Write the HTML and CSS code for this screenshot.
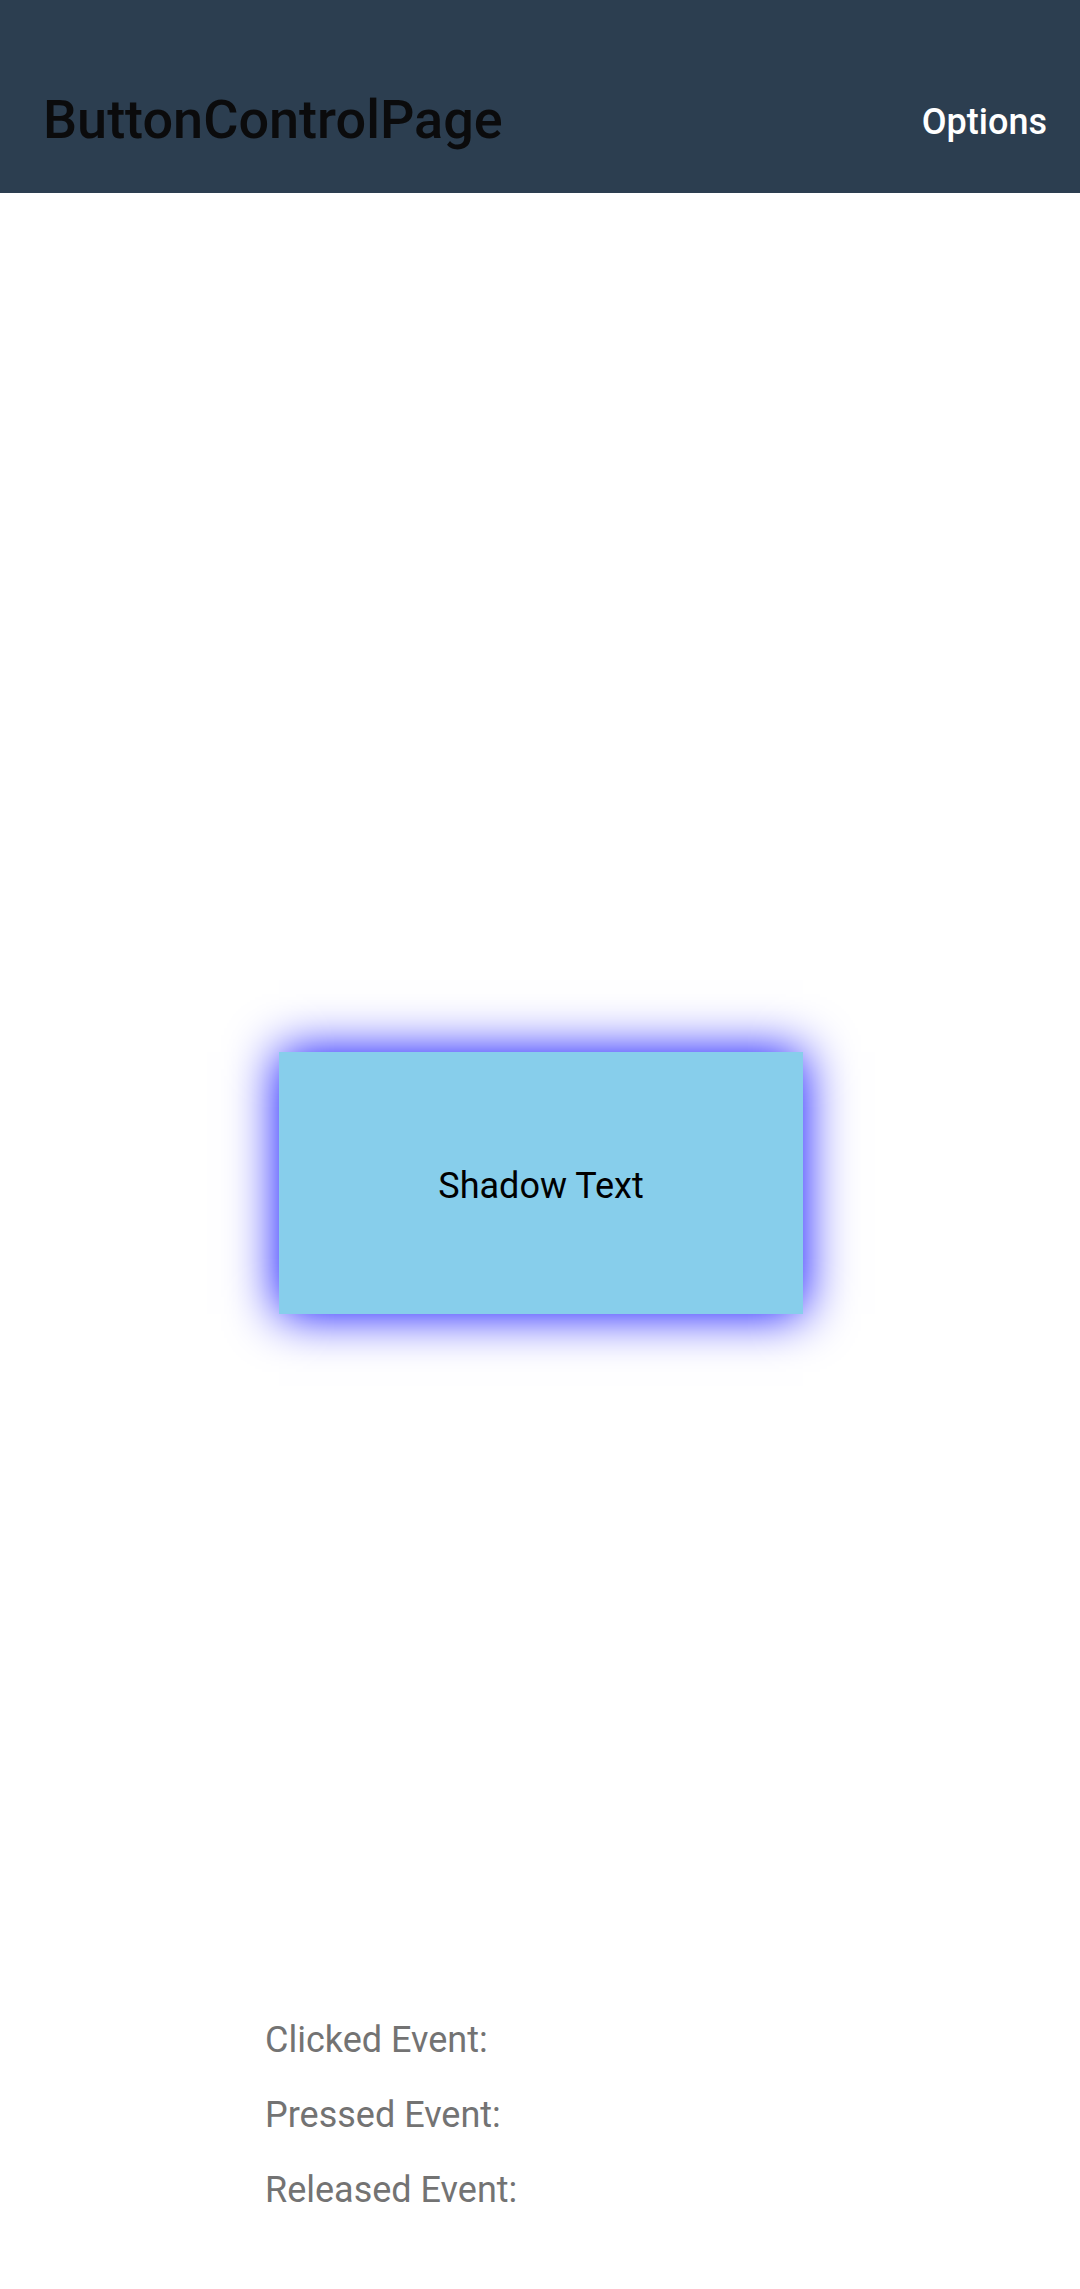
FILE: index.html
```html
<!DOCTYPE html>
<html>
<head>
<meta charset="utf-8">
<link rel="stylesheet" href="styles.css">
</head>
<body>
<header class="appbar">
  <div class="title">ButtonControlPage</div>
  <div class="options">Options</div>
</header>
<main class="content">
  <div class="button-wrap">
    <div class="shadow-button">Shadow Text</div>
  </div>
  <div class="events">
    <div class="event">Clicked Event:</div>
    <div class="event">Pressed Event:</div>
    <div class="event">Released Event:</div>
  </div>
</main>
</body>
</html>
```

FILE: styles.css
```css
html, body {
  margin: 0;
  padding: 0;
  background: #ffffff;
  font-family: Roboto, "Noto Sans", "Liberation Sans", sans-serif;
}

body {
  width: 1080px;
  height: 2289px;
  overflow: hidden;
}

.appbar {
  box-sizing: border-box;
  height: 193px;
  background: #2c3e50;
  display: flex;
  justify-content: space-between;
  align-items: flex-start;
  padding: 90px 33px 0 43px;
}

.title {
  font-size: 54px;
  font-weight: 500;
  line-height: 60px;
  color: #0b0b0c;
}

.options {
  margin-top: 10px;
  font-size: 36px;
  font-weight: 500;
  line-height: 44px;
  color: #ffffff;
}

.content {
  display: flex;
  flex-direction: column;
}

.button-wrap {
  display: flex;
  justify-content: center;
  padding-top: 859px;
  padding-left: 2px;
}

.shadow-button {
  box-sizing: border-box;
  width: 524px;
  height: 262px;
  padding-top: 5px;
  background: #87ceeb;
  box-shadow: 0 0 48px #0000ff;
  display: flex;
  align-items: center;
  justify-content: center;
  font-size: 36px;
  color: #000000;
}

.events {
  margin-top: 689px;
  padding-left: 265px;
  display: flex;
  flex-direction: column;
}

.event {
  font-size: 36px;
  line-height: 75px;
  color: #737373;
}
```
